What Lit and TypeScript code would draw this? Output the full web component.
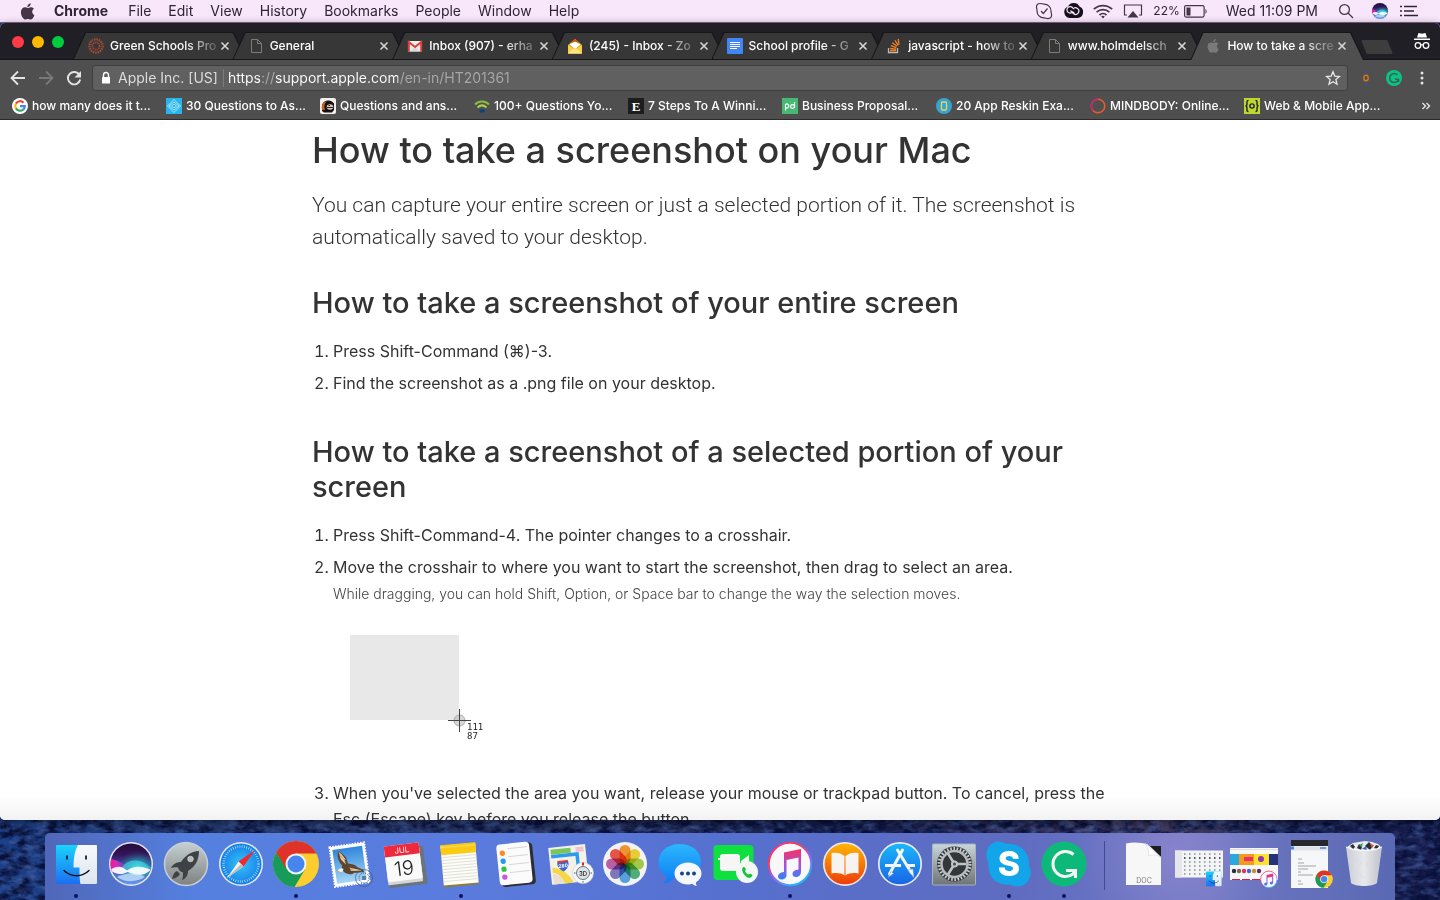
import { LitElement, html, svg, css } from "lit";
import { customElement } from "lit/decorators.js";
import { classMap } from "lit/directives/class-map.js";

const APPLE = "M11.2 3.1c.7-.8 1.100-1.900 1-3-1 .1-2.100.7-2.800 1.500-.6.7-1.100 1.800-1 2.900 1.100 0 2.100-.6 2.800-1.400zM12.300 4.700c-1.500-.1-2.800.9-3.500.9-.8 0-1.900-.8-3.100-.8-1.600 0-3 1-3.900 2.300-1.600 2.800-.4 7 1.200 9.300.8 1.100 1.700 2.400 2.900 2.300 1.200 0 1.600-.8 3.100-.8 1.400 0 1.800.8 3.100.8s2.100-1.100 2.900-2.300c.9-1.300 1.300-2.600 1.300-2.700 0 0-2.500-1-2.500-3.800 0-2.400 1.900-3.500 2-3.600-1.100-1.500-2.800-1.600-3.500-1.600z";
const BITE = svg`<path d=${APPLE} />`;
const PHONE = svg`<path d="M2 1c1-1 2 0 2.500 1s.5 1.500-.5 2.500c.5 1.500 2 3 3.500 3.500 1-1 1.500-1 2.500-.5s2 1.500 1 2.500C9 12 7 12 4.500 9.500S0 3 2 1z"/>`;

const page16 = html`<svg viewBox="0 0 16 16" width="16" height="16"><path d="M3.500 1.500h6l4 4v9h-10zM9.500 1.500v4h4" fill="none" stroke="#7c7c7c"/></svg>`;

const gIcon = html`<svg viewBox="0 0 16 16" width="16" height="16"><circle cx="8" cy="8" r="8" fill="#fff"/><g fill="none" stroke-width="2.200"><path d="M11.500 4.700A4.800 4.800 0 0 0 3.900 5.600" stroke="#ea4335"/><path d="M3.900 5.600a4.800 4.800 0 0 0 0 4.800" stroke="#fbbc05"/><path d="M3.900 10.400a4.800 4.800 0 0 0 7.200 1.200" stroke="#34a853"/><path d="M8 8.200h4.800a4.800 4.800 0 0 1-1.700 3.400" stroke="#4285f4"/></g></svg>`;

const tabIcons = {
  green: html`<svg viewBox="0 0 16 16" width="16" height="16"><g fill="none" stroke="#9c4a38"><circle cx="8" cy="8" r="6.600" stroke-width="2.400" stroke-dasharray="1.600 .8"/><circle cx="8" cy="8" r="3.600" stroke-width="1.800" stroke-dasharray="1.200 .7"/></g></svg>`,
  page: page16,
  gmail: html`<svg viewBox="0 0 16 16" width="16" height="16"><path d="M1 3h14v10.500H1z" fill="#eee"/><path d="M3 13.500 8 9l5 4.500z" fill="#d8d8d8"/><path d="M1.800 13.500V4L8 9l6.200-5v9.500" fill="none" stroke="#d93f33" stroke-width="2"/></svg>`,
  zoho: html`<svg viewBox="0 0 16 16" width="16" height="16"><path d="M1 7 8 .8 15 7v8.500H1z" fill="#d9a520"/><path d="M4 4.500 8 1l4 3.500z" fill="#c94e12"/><path d="m2.500 6.500 5.500-3 5.500 3L8 11z" fill="#fff"/><path d="m1 7 7 4.500L15 7v8.500H1z" fill="#f6cf45"/><path d="m1 15.500 5.500-5L8 11.500l1.500-1 5.500 5z" fill="#fbe48a"/></svg>`,
  docs: html`<svg viewBox="0 0 16 16" width="16" height="16"><rect width="16" height="16" rx="1" fill="#4285f4"/><path d="M3 4.500h10M3 6.500h10M3 8.500h10M3 10.500h7" stroke="#fff"/></svg>`,
  stack: html`<svg viewBox="0 0 16 16" width="16" height="16"><path d="M2.500 10v4.500h9V10" fill="none" stroke="#bcbbbb" stroke-width="1.300"/><g stroke="#f48024" stroke-width="1.300"><path d="M4 12.500h6M4.100 10.300l5.900.8M4.800 7.600l5.500 2M6.300 4.700l4.800 3.500M9 2.300l3.200 5M12.200.8l.8 5.800"/></g></svg>`,
  apple: html`<svg viewBox="0 0 17 19" width="16" height="14" fill="#7a7a7a">${BITE}</svg>`,
};

const bookmarkIcons = {
  google: gIcon,
  diamond: html`<svg viewBox="0 0 16 16" width="16" height="16"><rect width="16" height="16" fill="#27b5ea"/><g fill="none" stroke="#c8f0ff" stroke-width=".8"><path d="m8 1.500 6.500 6.500L8 14.500 1.500 8z"/><path d="m8 4 5 4-5 4-5-4zM8 6l2.500 2L8 10 5.500 8z"/></g></svg>`,
  face: html`<svg viewBox="0 0 16 16" width="16" height="16"><rect width="16" height="16" rx="2" fill="#f3efec"/><path d="M2 13V7c1-4 6-6 10-3.500l2 2V12l-2 2.500H4z" fill="#17100d"/><path d="M2 12c-1-5 1-8 5-8.500-3 2-3 5-2 8.500z" fill="#c9622c"/><ellipse cx="10" cy="9" rx="3.300" ry="2.700" fill="#cfcac6"/><path d="M7 9.500h6M8.500 7.500h1.500" stroke="#222"/></svg>`,
  wifi: html`<svg viewBox="0 0 16 16" width="16" height="16" fill="none" stroke-width="2"><path d="M1 6.500c4-4 10-4 14 0" stroke="#86bd3a"/><path d="M3.500 9.500c3-2.800 6-2.800 9 0" stroke="#a9d04b"/><path d="M5 11.500h6l-1 3H6z" fill="#0d3f86"/></svg>`,
  e: html`<svg viewBox="0 0 16 16" width="16" height="16"><rect width="16" height="16" fill="#1d1d1d"/><text x="8" y="13" text-anchor="middle" class="serif-e">E</text></svg>`,
  pd: html`<svg viewBox="0 0 16 16" width="16" height="16"><rect width="16" height="16" fill="#47b972"/><g fill="none" stroke="#fff" stroke-width="1.100"><path d="M3.500 12.500V6.500a2 2 0 1 1 0 3M12.500 4v6"/><circle cx="10.500" cy="8.500" r="1.900"/></g></svg>`,
  reskin: html`<svg viewBox="0 0 16 16" width="16" height="16"><circle cx="8" cy="8" r="8" fill="#36a3cf"/><rect x="5.500" y="4" width="5" height="8" rx="1" fill="none" stroke="#f2d45c" stroke-width="1.300"/></svg>`,
  mind: html`<svg viewBox="0 0 16 16" width="16" height="16"><circle cx="8" cy="8" r="6.800" fill="none" stroke="#e8592c" stroke-width="1.600"/><path d="M8 1.200a6.800 6.800 0 0 0-5 11.300" fill="none" stroke="#b32d6c" stroke-width="1.800"/></svg>`,
  braces: html`<svg viewBox="0 0 16 16" width="16" height="16"><rect width="16" height="16" fill="#bfd730"/><g fill="none" stroke="#222" stroke-width="1.400"><path d="M4.500 2.500c-2 0-1.500 1-1.500 3S2 8 1.500 8c.5 0 1.500.5 1.500 2.500s-.5 3 1.500 3M11.500 2.500c2 0 1.500 1 1.500 3s1 2.500 1.500 2.500c-.5 0-1.500.5-1.500 2.500s.5 3-1.500 3"/><circle cx="8" cy="8" r="2.100"/></g></svg>`,
};

const finder = svg`<linearGradient id="fi" y2="1" x2="0"><stop stop-color="#19d3fd"/><stop offset="1" stop-color="#1b6ff2"/></linearGradient><linearGradient id="fw" y2="1" x2="0"><stop stop-color="#f8fafc"/><stop offset="1" stop-color="#dbe4ef"/></linearGradient><rect x="4" y="5" width="41" height="39" rx="1" fill="url(#fi)"/><path d="M26 5h18a1 1 0 0 1 1 1v37a1 1 0 0 1-1 1H28.500c-.8-4-1-8-1-16.500H21.500C21.500 18 23 10 26 5z" fill="url(#fw)"/><path d="M15 15.500v4M34 15.500v4" stroke="#123" stroke-width="1.800"/><path d="M12 30.500c7 7 18 7 25 0" fill="none" stroke="#111" stroke-width="1.400" stroke-linecap="round"/>`;
const siri = svg`<linearGradient id="s1" x2="0" y2="1"><stop stop-color="#1c0a33"/><stop offset=".3" stop-color="#351458"/><stop offset=".55" stop-color="#3a4fa8"/><stop offset="1" stop-color="#6fa8fa"/></linearGradient><linearGradient id="s2"><stop stop-color="#f0159a"/><stop offset=".35" stop-color="#d92bb4"/><stop offset="1" stop-color="#5b50d6" stop-opacity="0"/></linearGradient><radialGradient id="s3" cx=".6" cy=".65" r=".55"><stop stop-color="#2ff0e4"/><stop offset="1" stop-color="#1b6f8e" stop-opacity="0"/></radialGradient><clipPath id="sc"><circle cx="24" cy="24" r="20.500"/></clipPath><circle cx="24" cy="24" r="22" fill="#e9e6ee"/><g clip-path="url(#sc)"><path d="M0 0h48v48H0z" fill="url(#s1)"/><path d="M8 8h38v30H8z" fill="url(#s3)"/><path d="M2 19c9 1 16 5 22 11-6 4-15 4-22 0z" fill="url(#s2)"/><path d="M14 29c6-11 20-11 30-1-9 7-22 7-30 1z" fill="#45dcea" opacity=".6"/><path d="M3 30c7-5 12-4 17 0.500 6-5 15-5 24-.5-8 7-17 6-23 2-6 3-12 3-18-2z" fill="#fff" opacity=".92"/><path d="M10 37c10-5 20-5 28 0-7 5-20 6-28 0z" fill="#c3e2ff" opacity=".8"/></g>`;
const rocket = svg`<linearGradient id="ro" y2="1" x2="0"><stop stop-color="#c6d0d2"/><stop offset="1" stop-color="#7d8181"/></linearGradient><circle cx="24" cy="24" r="21.500" fill="url(#ro)" stroke="#c9ced2" stroke-width="1.500"/><path d="M37 11c-8 0-14 5-18 11-4 0-8 2-10 6 3-1 5-1 7-.5 1 3 2 4 5 5 0 3 0 5-1 8 5-3 6-6 6-9.500C33 27 37 20 37 11z" fill="#3e4244"/><circle cx="28.500" cy="19" r="2.800" fill="#b3bbbd" stroke="#e5e9ea" stroke-width=".6"/><path d="M15 31c-3 1-4 4-5 8 4-1 6-2 8-5z" fill="#3e4244"/>`;
const safari = svg`<radialGradient id="sa"><stop stop-color="#36c5f8"/><stop offset="1" stop-color="#1680e8"/></radialGradient><circle cx="24" cy="24" r="22" fill="#e8ecf0"/><circle cx="24" cy="24" r="20.500" fill="url(#sa)"/><circle cx="24" cy="24" r="17.500" fill="none" stroke="#d5f1ff" stroke-width="2.400" stroke-dasharray=".6 1.700"/><path d="m38 10-11.500 16.500-5-5z" fill="#f2282c"/><path d="m10 38 11.500-16.500 5 5z" fill="#f4f4f4"/><path d="m10 38 14-14 2.500 2.500z" fill="#b5bcc4"/>`;
const chrome = svg`<circle cx="24" cy="24" r="23" fill="#fbcd2e"/><path d="M4.100 12.500A23 23 0 0 1 43.900 12.500L44.400 13.500H24L14 29.500z" fill="#df3228"/><path d="M4.100 12.500A23 23 0 0 0 22.500 47L33 29.500 14.800 29.300z" fill="#179b58"/><circle cx="24" cy="24" r="10.500" fill="#f2f2f2"/><circle cx="24" cy="24" r="8.500" fill="#4587ee"/>`;
const mail = svg`<linearGradient id="ma" y2="1" x2="0"><stop stop-color="#2f86dc"/><stop offset="1" stop-color="#a6d6f5"/></linearGradient><g transform="rotate(-8 24 24)"><rect x="5" y="4.500" width="35" height="40" fill="#fff" stroke="#fff" stroke-width="2" stroke-dasharray="1.600 1.200"/><rect x="7.500" y="7.500" width="30" height="34" fill="url(#ma)"/><path d="M13 9c2 2 5 4 7 8l1 6c4 1 7 2 9 5l5 3 1 3c-4-1-7 0-10-1-3 2-7 1-10-2-2-2-2-5-1-7-3-4-4-9-2-15z" fill="#5d4530"/><path d="m13 9 5 8 1 7-4-5zM22 27l9 5-8-1z" fill="#d2b285"/><path d="m15 12 4 7M14 16l4 5M25 29l8 3" stroke="#efe3cc" stroke-width=".8"/><path d="M10 29c1-2 4-3 6-1l-2 3z" fill="#f6efe0"/><path d="m9 30 2-1v2z" fill="#e8a92c"/></g><circle cx="37" cy="38" r="8.500" fill="none" stroke="#44587a" stroke-width="1" opacity=".7"/><circle cx="37" cy="38" r="5" fill="none" stroke="#44587a" stroke-dasharray="1 1"/><path d="M35 36h4v4h-4z" fill="#44587a" opacity=".7"/>`;
const calendar = svg`<g transform="rotate(-7 24 24)"><rect x="5" y="8" width="38" height="38" rx="1" fill="#6b7478"/><rect x="4" y="5" width="35" height="38" rx="1" fill="#d4d6d6"/><rect x="4" y="4" width="35" height="36" rx="1" fill="#fafafa"/><path d="M4 15V5a1 1 0 0 1 1-1h33a1 1 0 0 1 1 1v10z" fill="#f0283c"/><text x="21.500" y="12.500" text-anchor="middle" class="jul">JUL</text><text x="21.500" y="35" text-anchor="middle" class="date">19</text></g>`;
const notes = svg`<g transform="rotate(-5 24 24)"><rect x="5" y="4" width="35" height="42" rx="1" fill="#8c7b3e"/><rect x="5" y="4" width="35" height="40" fill="#fdfdf8"/><path d="M5 3.500h35v10H5z" fill="#fcc913"/><path d="M5 6h35" stroke="#ffe05a"/><path d="M5 16h35M5 19h35M5 22h35M5 25h35M5 28h35M5 31h35M5 34h35M5 37h35M5 40h35" stroke="#d9d9d2" stroke-width=".8"/></g>`;
const reminders = svg`<g transform="rotate(-6 24 24)"><rect x="9" y="4" width="34" height="42" rx="4" fill="#2c2e33"/><rect x="7" y="3" width="33" height="41" rx="4" fill="#fbfbfb"/><path d="M18 8h20M18 16h20M18 24h20M18 32h20" stroke="#cfcfcf" stroke-width=".8"/><circle cx="12.500" cy="12" r="2.700" fill="#fb8b1e"/><circle cx="12.500" cy="20" r="2.700" fill="#1e9df2"/><circle cx="12.500" cy="28" r="2.700" fill="#2bc840"/><circle cx="12.500" cy="36" r="2.700" fill="#d053e2"/></g>`;
const maps = svg`<g transform="rotate(-6 22 24)"><rect x="4" y="6" width="37" height="37" fill="#f4f1e8"/><path d="M6 8h20v5H6z" fill="#7ac65a"/><path d="M31 8h8v5h-8z" fill="#f3c3cd"/><path d="M6 15h26v24" fill="none" stroke="#2d9af0" stroke-width="3.500"/><path d="M6 26c10 2 16 8 20 17h-9C15 36 11 32 6 31z" fill="#f7d644"/><path d="M6 32c6 1 9 5 11 11H6z" fill="#e8dfd0"/><path d="M12 20c4 1 6 1 10 0 2 5-1 9-5 11-4-2-7-6-5-11z" fill="#3c67c5"/><path d="M12 20h10v2H12z" fill="#df3b3b"/><text x="17" y="27" text-anchor="middle" class="tiny">280</text></g><circle cx="37" cy="33" r="10.500" fill="#f6f7f8" stroke="#c9ccd0" stroke-width=".6"/><circle cx="37" cy="33" r="6.500" fill="#dde3e6" stroke="#4c5c66" stroke-width=".8"/><text x="37" y="35.500" text-anchor="middle" class="three">3D</text><path d="M37 22.500v3" stroke="#e02020" stroke-width="2"/><path d="M37 41v1.500M28 33h1.500M44.500 33h1.500" stroke="#555"/>`;
const PETALS = ["#f88a12", "#f2cf16", "#9ccb2c", "#36ab68", "#3f9bdb", "#6f66bd", "#b84a9c", "#ee3a2c"];
const photos = svg`<circle cx="24" cy="24" r="22" fill="#f3f2f4"/>${PETALS.map((c, i) => svg`<rect class="petal" x="18.500" y="5" width="11" height="19" rx="5.500" fill=${c} transform=${`rotate(${i * 45} 24 24)`}/>`)}`;
const messages = svg`<linearGradient id="ms" y2="1" x2="0"><stop stop-color="#2bb7fd"/><stop offset="1" stop-color="#0f7df3"/></linearGradient><path d="M24 4C11 4 2.500 12 2.500 22c0 7 3 11 8 14 0 3-1 5-3 7 5 0 8-2 10-5 2 .5 4 .7 6.500.7 13 0 21-7 21-16.700S37 4 24 4z" fill="url(#ms)"/><path d="M32 22.500c-8 0-13.500 5-13.500 11s5.500 11 13.500 11c2 0 3-.2 4.500-.7 1 1.500 2.500 2 4.500 2-1-1-1.200-2-1-3.500 3.500-2 5.500-5 5.500-8.800 0-6-5.500-11-13.500-11z" fill="#f4f8fc"/><g fill="#1a4388"><circle cx="26" cy="33.500" r="2"/><circle cx="32" cy="33.500" r="2"/><circle cx="38" cy="33.500" r="2"/></g>`;
const facetime = svg`<rect x="2.500" y="5" width="40" height="35" rx="4" fill="#0ee03f"/><rect x="9" y="14" width="20" height="17" rx="3" fill="#f6f6f6"/><path d="m30 21 8-6v14l-8-4z" fill="#f6f6f6"/><path d="M7 18h2v2H7z" fill="#f6f6f6"/><circle cx="36" cy="32" r="11" fill="#f4f6f6"/><g fill="#12c53b" transform="translate(30 26.500)">${PHONE}</g>`;
const itunes = svg`<linearGradient id="it" x2=".6" y2="1"><stop stop-color="#fb2f8e"/><stop offset=".35" stop-color="#fb3a52"/><stop offset=".65" stop-color="#a55df2"/><stop offset="1" stop-color="#21b7f8"/></linearGradient><linearGradient id="in" x2="0" y2="1"><stop stop-color="#fa2e60"/><stop offset=".6" stop-color="#9a57e4"/><stop offset="1" stop-color="#2688f0"/></linearGradient><circle cx="24" cy="24" r="21.200" fill="#f8f7fa" stroke="url(#it)" stroke-width="2"/><path d="M18 12.500 35 9v23c0 3-2.500 5-5 5-2.200 0-3.500-1.300-3.500-3 0-2.500 2-4 6-4.500V17.500l-12 2.500v15c0 3-2.500 4.500-5 4.500S12 38 12 36.300c0-2.500 2-3.800 6-4.300z" fill="url(#in)"/>`;
const ibooks = svg`<linearGradient id="ib" x2="0" y2="1"><stop stop-color="#feb703"/><stop offset="1" stop-color="#ec3b08"/></linearGradient><circle cx="24" cy="24" r="21.200" fill="url(#ib)" stroke="#ece6ea" stroke-width="1.700"/><path d="M23.500 16c-3-3-8-4-13-3v20.500c5-1 10-.5 13 2zM24.500 16c3-3 8-4 13-3v20.500c-5-1-10-.5-13 2z" fill="#f6f3f0"/>`;
const appstore = svg`<linearGradient id="as" x2="0" y2="1"><stop stop-color="#19b9fb"/><stop offset="1" stop-color="#1a63e6"/></linearGradient><circle cx="24" cy="24" r="21.200" fill="url(#as)" stroke="#e8ecf2" stroke-width="1.700"/><g stroke="#f2f6fa" fill="none" stroke-linecap="round"><path d="M26.500 10 13.500 34" stroke-width="3"/><path d="m21.500 10 14 23" stroke-width="3"/><path d="M9 25.500h16M30 25.500h9" stroke-width="3" stroke-linecap="butt"/></g><path d="m15 31.500-3 6 5.500-4zM32 30l6 8-1-9z" fill="#f2f6fa" stroke="#7292c6" stroke-width=".5"/>`;
const settings = svg`<linearGradient id="se" x2="0" y2="1"><stop stop-color="#c8d6dc"/><stop offset="1" stop-color="#6f7376"/></linearGradient><rect x="2.500" y="4" width="43" height="41" rx="1" fill="url(#se)" stroke="#a9b3b8"/><circle cx="24.500" cy="24" r="17.500" fill="#34373a"/><circle cx="24.500" cy="24" r="15.500" fill="none" stroke="#cdd0d2" stroke-width="3" stroke-dasharray="1.600 1.650"/><circle cx="24.500" cy="24" r="13" fill="none" stroke="#b9bcbe" stroke-width="2.500"/><g stroke="#c1c4c6" stroke-width="2.500"><path d="M24.500 24h12M24.500 24l-6.500-10.500M24.500 24l-6.500 10.500"/></g><circle cx="24.500" cy="24" r="3.500" fill="#c1c4c6"/><circle cx="24.500" cy="24" r="1.500" fill="#44484b"/>`;
const skype = svg`<path d="M13 1.500c4 0 6 1 8 2.500C34 2.500 45 12 44 25.500c4 8 1 20-11 21-4 0-6-.8-8-2C12 46 2 37 3.500 23-2 12 4 2 13 1.500z" fill="#12a5ea"/><text x="24" y="36" text-anchor="middle" class="skype">S</text>`;
const grammarly = svg`<circle cx="24" cy="24" r="22.500" fill="#0cb978"/><path d="M33.500 14.500A12.500 12.500 0 1 0 33 34l2-3.500" fill="none" stroke="#f4f4f4" stroke-width="3"/><path d="M26 30.500h9.500V38" fill="none" stroke="#f4f4f4" stroke-width="3"/>`;
const doc = svg`<path d="M6 3.500c8-2 16-.5 21 .5l14 12v29H6z" fill="#f7f7f7"/><path d="M30 6h11v11z" fill="#1c1d1f"/><path d="M25 3.500c3 3 4 8 3.500 12 4-1 9-1 12.500 2z" fill="#fff" stroke="#d5d5d5" stroke-width=".6"/><text x="24" y="42.500" text-anchor="middle" class="doc">DOC</text>`;
const winFinder = svg`<rect x="0" y="10.500" width="48" height="27" fill="#f3f4f6"/><path d="M0 10.500h7v27H0z" fill="#e6e7ea"/><g stroke="#a3a6ab" stroke-width="2" stroke-dasharray="1.500 3.500"><path d="M9 14h37M9 22h37M9 26h37M9 30h37M9 34h37"/><path d="M9 18h37" stroke="#55585e"/></g><g transform="translate(29.500 29.500) scale(.38)">${finder}</g>`;
const winItunes = svg`<rect x="0" y="8" width="48" height="32" fill="#f8f8f8"/><path d="M0 14h9v11H0z" fill="#2aa9e0"/><path d="M9 14h15v11H9z" fill="#f69a1c"/><path d="M14 17h9v4h-9z" fill="#ee2f6d"/><path d="M24 14h15v11H24z" fill="#fde229"/><path d="M39 14h9v11h-9z" fill="#24327a"/><circle cx="31" cy="19" r="3" fill="#8a39b4"/><g><circle cx="4" cy="31" r="2.200" fill="#234"/><circle cx="9" cy="31" r="2.200" fill="#864"/><circle cx="14" cy="31" r="2.200" fill="#d36"/><circle cx="19" cy="31" r="2.200" fill="#46c"/><circle cx="24" cy="31" r="2.200" fill="#c83"/><circle cx="29" cy="31" r="2.200" fill="#536"/></g><path d="M2 39.500h8M12 39.500h8M22 39.500h8" stroke="#cf2549"/><path d="M0 9.500h48" stroke="#ddd"/><g transform="translate(29.500 30) scale(.39)">${itunes}</g>`;
const winChrome = svg`<rect x="6" y="0" width="37" height="48" fill="#f6f7f8"/><path d="M6 0h37v6H6z" fill="#26282b"/><path d="M6 6.500h37v4H6z" fill="#dfe3e8"/><path d="M6 6.500h3v3H6z" fill="#4285f4"/><path d="M35 8h6" stroke="#4285f4" stroke-width="1.500"/><g stroke="#9a9a9a" stroke-width=".9"><path d="M13 19h4M13 23h6M13 26h18M13 29h10M13 32h3M13 35h15M13 41h3M13 44h5"/></g><g transform="translate(30 30) scale(.38)">${chrome}</g>`;
const trash = svg`<linearGradient id="tr"><stop stop-color="#cfd2d6"/><stop offset=".5" stop-color="#efefef"/><stop offset="1" stop-color="#c4c6cc"/></linearGradient><path d="m7 7 6-4 6-1 6-1 7 1 6 2 3 3-4 4H13z" fill="#e9ebee"/><path d="m10 6 3-2 2 3-2 2zM17 8l2-4 3 3-1 3zM25 6l4-4 4 4-3 4zM34 8l2-3 3 1-2 3z" fill="#2b3138"/><path d="m19 5 4-2-1 4z" fill="#3ca55c"/><path d="m30 4 4 1-2 3z" fill="#d9542b"/><path d="m22 9 4-3 1 4z" fill="#3566cc"/><path d="M6 7c8 4.500 28 4.500 36 0l-5 36c-4 4-22 4-26 0z" fill="url(#tr)" opacity=".95"/><path d="M6 7c8 4.500 28 4.500 36 0" fill="none" stroke="#fff"/><path d="m13 16 8 7-5 9 9 6M33 15l-7 9 6 9" fill="none" stroke="#dcdcdc"/>`;

const DOCK = [
  { name: "Finder", art: finder, open: true }, { name: "Siri", art: siri }, { name: "Launchpad", art: rocket },
  { name: "Safari", art: safari }, { name: "Chrome", art: chrome, open: true }, { name: "Mail", art: mail },
  { name: "Calendar", art: calendar }, { name: "Notes", art: notes, open: true }, { name: "Reminders", art: reminders },
  { name: "Maps", art: maps }, { name: "Photos", art: photos }, { name: "Messages", art: messages },
  { name: "FaceTime", art: facetime }, { name: "iTunes", art: itunes, open: true }, { name: "iBooks", art: ibooks },
  { name: "App Store", art: appstore }, { name: "System Preferences", art: settings },
  { name: "Skype", art: skype, open: true }, { name: "Grammarly", art: grammarly, open: true },
];
const STACKS = [
  { name: "Document", art: doc }, { name: "Finder window", art: winFinder }, { name: "iTunes window", art: winItunes },
  { name: "Chrome window", art: winChrome }, { name: "Trash", art: trash },
];

const TABS: { title: string; icon: keyof typeof tabIcons }[] = [
  { title: "Green Schools Pro", icon: "green" }, { title: "General", icon: "page" },
  { title: "Inbox (907) - erha", icon: "gmail" }, { title: "(245) - Inbox - Zo", icon: "zoho" },
  { title: "School profile - G", icon: "docs" }, { title: "javascript - how to", icon: "stack" },
  { title: "www.holmdelsch", icon: "page" }, { title: "How to take a scre", icon: "apple" },
];
const BOOKMARKS: { title: string; icon: keyof typeof bookmarkIcons }[] = [
  { title: "how many does it t...", icon: "google" }, { title: "30 Questions to As...", icon: "diamond" },
  { title: "Questions and ans...", icon: "face" }, { title: "100+ Questions Yo...", icon: "wifi" },
  { title: "7 Steps To A Winni...", icon: "e" }, { title: "Business Proposal...", icon: "pd" },
  { title: "20 App Reskin Exa...", icon: "reskin" }, { title: "MINDBODY: Online...", icon: "mind" },
  { title: "Web & Mobile App...", icon: "braces" },
];

const reset = css`
  * { box-sizing: border-box; }
  button { margin: 0; padding: 0; border: 0; background: none; color: inherit; font: inherit; display: flex; align-items: center; justify-content: center; }
  a { color: inherit; text-decoration: none; }
  svg { display: block; flex: none; }
`;

@customElement("menu-bar")
class MenuBar extends LitElement {
  static styles = [reset, css`
    :host { display: flex; align-items: center; justify-content: space-between; height: 23px; padding: 0 22px 0 20px; background: #f8e7fb; border-bottom: 1px solid #85618f; color: #2f2436; font: 400 14px/22px Inter, sans-serif; }
    nav, .status { display: flex; align-items: center; }
    nav { gap: 17px; }
    .strong { margin: 0 3px 0 2px; font-weight: 700; }
    .status { gap: 10px; }
    .power { display: flex; align-items: center; gap: 4px; font-size: 12px; }
    .clock { padding: 0 10px 0 8px; }
    .siri { margin: 0 2px 0 8px; }
  `];
  render() {
    return html`
      <nav aria-label="Menu">
        <button aria-label="Apple menu"><svg viewBox="0 0 17 19" width="15" height="17" fill="#453549">${BITE}</svg></button>
        <button class="strong">Chrome</button>
        ${["File", "Edit", "View", "History", "Bookmarks", "People", "Window", "Help"].map((m) => html`<button>${m}</button>`)}
      </nav>
      <div class="status">
        <svg viewBox="0 0 18 18" width="18" height="18" fill="none" stroke="#453549" stroke-width="1.200"><path d="M5 1.500c2 0 2 .6 4 .6 4 0 7 3 7 7 0 2 .6 2.400.6 4 0 2-1.600 3.500-3.600 3.500-1.800 0-2-.7-4-.7-4 0-7-3-7-7C2 7 1.500 6 1.500 5c0-2 1.500-3.500 3.500-3.500z"/><path d="m6 9 2.300 2.500L12.500 6.500"/></svg>
        <svg viewBox="0 0 20 16" width="20" height="16"><path d="M6.500 15A6 6 0 0 1 5 3.500 6.500 6.500 0 0 1 16.500 3.500 6 6 0 0 1 14.500 15z" fill="#15101a"/><g fill="none" stroke="#f8e7fb" stroke-width="1.200"><path d="m11.500 10.500-1.800-1.700a3.200 3.200 0 1 1 .2-3.600"/><path d="m7.500 7.500 3 3.300a3.300 3.300 0 1 0-.6-4.700"/></g></svg>
        <svg viewBox="0 0 20 15" width="20" height="15" fill="none" stroke="#453549" stroke-width="1.700"><path d="M.8 5.200a13.500 13.500 0 0 1 18.400 0M3.600 8.200a9.300 9.300 0 0 1 12.800 0M6.500 11a5.200 5.200 0 0 1 7 0"/><path d="m8.200 12.600 1.800 2 1.800-2a2.500 2.500 0 0 0-3.600 0z" fill="#453549" stroke="none"/></svg>
        <svg viewBox="0 0 20 16" width="20" height="16"><path d="M4 12H1.500V2h17v10H16" fill="none" stroke="#453549" stroke-width="1.200"/><path d="m10 8 5.500 6.500h-11z" fill="#453549"/></svg>
        <span class="power">22%<svg viewBox="0 0 24 13" width="24" height="13"><rect x=".6" y=".6" width="19.500" height="11.500" rx="1.500" fill="none" stroke="#453549" stroke-width="1.200"/><path d="M2.500 2.500h4v8h-4zM21.500 4c1.500.6 1.500 4.300 0 5z" fill="#453549"/></svg></span>
        <span class="clock">Wed 11:09 PM</span>
        <svg viewBox="0 0 16 16" width="16" height="16" fill="none" stroke="#453549" stroke-width="1.300"><circle cx="6.500" cy="6.500" r="4.900"/><path d="m10 10 5 5"/></svg>
        <svg class="siri" viewBox="3.500 3.500 41 41" width="16" height="16">${siri}</svg>
        <svg viewBox="0 0 18 12" width="18" height="12" stroke="#2f2436" stroke-width="1.600"><path d="M0 1.500h2M4 1.500h13M0 6h2M4 6h10M0 10.500h2M4 10.500h14"/></svg>
      </div>`;
  }
}

@customElement("browser-chrome")
class BrowserChrome extends LitElement {
  static styles = [reset, css`
    :host { display: block; color: #fff; font: 500 12px/16px Inter, sans-serif; }
    .strip { display: flex; align-items: flex-end; height: 37px; padding: 0 9px 0 12px; background: #211f26; box-shadow: inset 0 -1px #151418; }
    .lights { display: flex; gap: 8px; align-self: center; margin-right: 9px; }
    .light { width: 12px; height: 12px; border-radius: 50%; }
    .close-light { background: #ff3b47; } .min-light { background: #ffb900; } .max-light { background: #00ce3f; }
    .tabs { display: flex; flex: 1; min-width: 0; height: 28px; }
    .tab { position: relative; isolation: isolate; display: flex; align-items: center; flex: 1; min-width: 0; height: 27px; margin-right: -14px; padding: 0 16px 0 15px; background: #17161a; clip-path: polygon(12px 0, calc(100% - 13px) 0, 100% 100%, 0 100%); }
    .tab::before { content: ""; position: absolute; z-index: -1; inset: 1px 1px 0; background: #373737; clip-path: polygon(12px 0, calc(100% - 13px) 0, 100% 100%, 0 100%); }
    .tab.active { z-index: 2; height: 28px; margin-right: 0; }
    .tab.active::before { background: #4f4f4f; }
    .title { flex: 1; min-width: 0; margin: 0 3px 0 6px; white-space: nowrap; mask-image: linear-gradient(90deg, #000 70%, #0003); }
    .x { width: 12px; height: 16px; }
    .new { width: 32px; height: 14px; margin: 0 20px 6px -3px; background: #3d3d3e; border-radius: 2px; clip-path: polygon(0 0, 82% 0, 100% 100%, 18% 100%); }
    .incognito { margin-bottom: 10px; }
    .bar { display: flex; align-items: center; gap: 8px; padding: 5px 8px 3px; background: #4f4f4f; }
    .icon { width: 20px; height: 20px; }
    .omni { flex: 1; min-width: 0; display: flex; align-items: center; height: 26px; padding: 0 6px 0 5px; border: 1px solid #3e3e3e; border-radius: 3px; background: #606060; font: 400 14px/18px Inter, sans-serif; }
    .owner { margin-left: 4px; padding-right: 5px; border-right: 1px solid #7b7b7b; color: #dcdcdc; white-space: nowrap; }
    .url { flex: 1; min-width: 0; margin-left: 4px; padding: 0; border: 0; outline: 0; font: inherit; color: transparent; -webkit-text-fill-color: transparent; background: linear-gradient(90deg, #fff 34px, #a8a8a8 34px 47px, #fff 47px 170px, #a8a8a8 170px); -webkit-background-clip: text; background-clip: text; }
    .marks { display: flex; align-items: center; height: 26px; padding: 0 9px 2px 12px; background: #4f4f4f; border-bottom: 1px solid #2b2b2b; }
    .mark { display: flex; align-items: center; gap: 4px; flex: 0 1 154px; min-width: 0; overflow: hidden; white-space: nowrap; }
    .more { margin-left: auto; }
    .serif-e { font: 700 13px "Liberation Serif", serif; fill: #fff; }
  `];
  render() {
    return html`
      <div class="strip">
        <div class="lights">
          <button class="light close-light" aria-label="Close window"></button>
          <button class="light min-light" aria-label="Minimise"></button>
          <button class="light max-light" aria-label="Zoom"></button>
        </div>
        <div class="tabs">
          ${TABS.map((t, i) => html`<div class=${classMap({ tab: true, active: i === TABS.length - 1 })}>
            ${tabIcons[t.icon]}<a class="title" href="#">${t.title}</a>
            <button class="x" aria-label="Close tab"><svg viewBox="0 0 10 10" width="10" height="10" stroke="#d6d6d6" stroke-width="1.600"><path d="m1.500 1.500 7 7M8.500 1.500l-7 7"/></svg></button>
          </div>`)}
        </div>
        <button class="new" aria-label="New tab"></button>
        <svg class="incognito" viewBox="0 0 18 18" width="18" height="18"><path d="M5.500 1 9 1.800 12.500 1l1.500 4.500H4zM1 6.500h16V8H1z" fill="#fff"/><g fill="none" stroke="#fff" stroke-width="1.300"><circle cx="5" cy="13.500" r="2.800"/><circle cx="13" cy="13.500" r="2.800"/><path d="M7.800 13c.8-.5 1.600-.5 2.400 0"/></g></svg>
      </div>
      <div class="bar">
        <button class="icon" aria-label="Back"><svg viewBox="0 0 16 16" width="16" height="16" fill="none" stroke="#e4e4e4" stroke-width="1.800"><path d="M15 8H2M8 1.500 1.500 8 8 14.500"/></svg></button>
        <button class="icon" aria-label="Forward"><svg viewBox="0 0 16 16" width="16" height="16" fill="none" stroke="#787878" stroke-width="1.800"><path d="M1 8h13M8 1.500 14.500 8 8 14.500"/></svg></button>
        <button class="icon" aria-label="Reload"><svg viewBox="0 0 16 16" width="16" height="16"><path d="M13.500 5A6.200 6.200 0 1 0 14.200 9.500" fill="none" stroke="#e4e4e4" stroke-width="1.900"/><path d="M15 1v6.500H8.500z" fill="#e4e4e4"/></svg></button>
        <div class="omni">
          <svg viewBox="0 0 16 16" width="16" height="16"><rect x="4" y="7" width="8" height="6.500" rx=".5" fill="#fff"/><path d="M5.500 7V5a2.500 2.500 0 0 1 5 0v2" fill="none" stroke="#fff" stroke-width="1.400"/></svg>
          <label class="owner" for="url">Apple Inc. [US]</label>
          <input id="url" class="url" type="text" .value=${"https://support.apple.com/en-in/HT201361"} />
          <button aria-label="Bookmark this page"><svg viewBox="0 0 16 16" width="16" height="16"><path d="m8 1.800 1.800 4.300 4.700.4-3.600 3.100 1.100 4.600L8 11.700l-4 2.500 1.100-4.600L1.500 6.500l4.700-.4z" fill="none" stroke="#e8e8e8" stroke-width="1.300"/></svg></button>
        </div>
        <button class="icon" aria-label="Extension"><svg viewBox="0 0 16 16" width="16" height="16"><ellipse cx="8" cy="8" rx="2.200" ry="2.800" fill="none" stroke="#d9741f" stroke-width="1.400"/><path d="M7 1.500h2v2H7zM7 13h2v2H7z" fill="#2b55b5"/></svg></button>
        <button class="icon" aria-label="Grammarly"><svg viewBox="0 0 16 16" width="16" height="16"><circle cx="8" cy="8" r="8" fill="#0ac386"/><path d="M11.500 5A4.500 4.500 0 1 0 11.600 11l.8-1.500M9 9.200h3.500V12" fill="none" stroke="#3f5f54" stroke-width="1.500"/></svg></button>
        <button class="icon" aria-label="Menu"><svg viewBox="0 0 4 16" width="4" height="16" fill="#e4e4e4"><circle cx="2" cy="3" r="1.500"/><circle cx="2" cy="8" r="1.500"/><circle cx="2" cy="13" r="1.500"/></svg></button>
      </div>
      <nav class="marks" aria-label="Bookmarks">
        ${BOOKMARKS.map((b) => html`<a class="mark" href="#">${bookmarkIcons[b.icon]}<span>${b.title}</span></a>`)}
        <button class="more" aria-label="More bookmarks"><svg viewBox="0 0 10 8" width="10" height="8" fill="none" stroke="#e4e4e4" stroke-width="1.400"><path d="m1.500 1 3 3-3 3M5.500 1l3 3-3 3"/></svg></button>
      </nav>`;
  }
}

@customElement("support-article")
class SupportArticle extends LitElement {
  static styles = [reset, css`
    :host { display: block; background: #fff; color: #333; font: 400 16px/26px Inter, "DejaVu Sans", sans-serif; }
    article { max-width: 816px; margin: 0 auto; padding-top: 8px; }
    h1, h2, p, ol { margin: 0; }
    h1 { font-size: 36px; font-weight: 500; line-height: 44px; }
    .intro { margin: 17px 0 32px; font: 300 21px/32px Roboto, sans-serif; }
    h2 { font-size: 29px; font-weight: 500; line-height: 35px; }
    ol { margin: 18px 0 38px; padding-left: 21px; }
    li + li { margin-top: 6px; }
    .note { font-size: 14px; font-weight: 300; line-height: 22px; margin-top: 3px; color: #444; }
    .figure { width: 160px; height: 169px; }
    .size { font: 9px "DejaVu Sans Mono", monospace; fill: #222; }
  `];
  render() {
    return html`<article>
      <h1>How to take a screenshot on your Mac</h1>
      <p class="intro">You can capture your entire screen or just a selected portion of it. The screenshot is automatically saved to your desktop.</p>
      <h2>How to take a screenshot of your entire screen</h2>
      <ol><li>Press Shift-Command (⌘)-3.</li><li>Find the screenshot as a .png file on your desktop.</li></ol>
      <h2>How to take a screenshot of a selected portion of your screen</h2>
      <ol>
        <li>Press Shift-Command-4. The pointer changes to a crosshair.</li>
        <li>Move the crosshair to where you want to start the screenshot, then drag to select an area.
          <p class="note">While dragging, you can hold Shift, Option, or Space bar to change the way the selection moves.</p>
          <svg class="figure" viewBox="0 0 160 169">
            <rect x="17" y="30" width="109" height="85" fill="#e8e8e8"/>
            <circle cx="126.500" cy="115.500" r="5.500" fill="#bbb" fill-opacity=".6" stroke="#aaa"/>
            <path d="M115 115.500h23M126.500 104v23" stroke="#444"/>
            <text class="size" x="134" y="125">111</text><text class="size" x="134" y="134">87</text>
          </svg>
        </li>
        <li>When you've selected the area you want, release your mouse or trackpad button. To cancel, press the Esc (Escape) key before you release the button.</li>
      </ol>
    </article>`;
  }
}

@customElement("app-dock")
class AppDock extends LitElement {
  static styles = [reset, css`
    :host { display: flex; height: 67px; padding: 0 4px; border-radius: 5px 5px 0 0; background: radial-gradient(100px 100px at 1130px 20px, #9289cfb0, transparent), linear-gradient(90deg, #5067b8, #5580e0 11%, #5a7bdd 32%, #5670cf 50%, #5f6cc0 72%, #7078c4 86%, #5a69b3); }
    .item { flex: 1; min-width: 0; flex-direction: column; justify-content: flex-start; gap: 6px; padding-top: 7px; }
    .dot { width: 4px; height: 4px; border-radius: 50%; }
    .open { background: #0b1358; }
    .rule { width: 25px; display: flex; justify-content: center; padding: 8px 0 10px; }
    .rule::before { content: ""; width: 1px; background: #3f4c93; }
    .petal { mix-blend-mode: multiply; opacity: .85; }
    text { font-family: Inter, sans-serif; }
    .jul { font-size: 8px; fill: #fff; } .date { font-size: 20px; fill: #222; font-weight: 300; }
    .tiny { font-size: 5px; fill: #fff; font-weight: 700; } .three { font-size: 6px; fill: #333; font-weight: 600; }
    .skype { font-size: 34px; font-weight: 800; fill: #fff; } .doc { font-size: 7px; fill: #777; }
  `];
  item(i: { name: string; art: unknown; open?: boolean }) {
    return html`<button class="item" aria-label=${i.name}><svg viewBox="0 0 48 48" width="48" height="48">${i.art}</svg><span class=${classMap({ dot: true, open: !!i.open })}></span></button>`;
  }
  render() {
    return html`${DOCK.map((i) => this.item(i))}<span class="rule"></span>${STACKS.map((i) => this.item(i))}`;
  }
}

@customElement("app-root")
class AppRoot extends LitElement {
  static styles = [reset, css`
    :host { position: relative; isolation: isolate; display: flex; flex-direction: column; height: 100vh; overflow: hidden; background: linear-gradient(90deg, #1c4089, #20386f 10%, #2b355f 40%, #141c48 60%, #453c5e 80%, #1e2552 90%, #171c4c); }
    .rock { position: absolute; z-index: -1; inset: auto 0 0; width: 100%; height: 80px; }
    .window { flex: 1; min-height: 0; overflow: hidden; position: relative; border-radius: 5px; box-shadow: 0 2px 8px #00000080; background: #fff; }
    .window::after { content: ""; position: absolute; inset: auto 0 0; height: 24px; background: linear-gradient(transparent, #0000000d); pointer-events: none; }
    .desk { padding: 13px 45px 0; }
  `];
  render() {
    return html`
      <svg class="rock" aria-hidden="true">
        <filter id="grain" x="0" y="0" width="100%" height="100%" color-interpolation-filters="sRGB"><feTurbulence type="fractalNoise" baseFrequency=".08 .16" numOctaves="5" seed="4"/><feColorMatrix values="0 0 0 0 .3  0 0 0 0 .42  0 0 0 0 .7  2.600 0 0 0 -1.150"/></filter>
        <filter id="shade" x="0" y="0" width="100%" height="100%" color-interpolation-filters="sRGB"><feTurbulence type="fractalNoise" baseFrequency=".07 .12" numOctaves="5" seed="11"/><feColorMatrix values="0 0 0 0 .03  0 0 0 0 .06  0 0 0 0 .22  3 0 0 0 -1.100"/></filter>
        <rect width="100%" height="100%" filter="url(#shade)"/><rect width="100%" height="100%" filter="url(#grain)" opacity=".6"/>
      </svg>
      <menu-bar></menu-bar>
      <main class="window"><browser-chrome></browser-chrome><support-article></support-article></main>
      <div class="desk"><app-dock></app-dock></div>`;
  }
}
